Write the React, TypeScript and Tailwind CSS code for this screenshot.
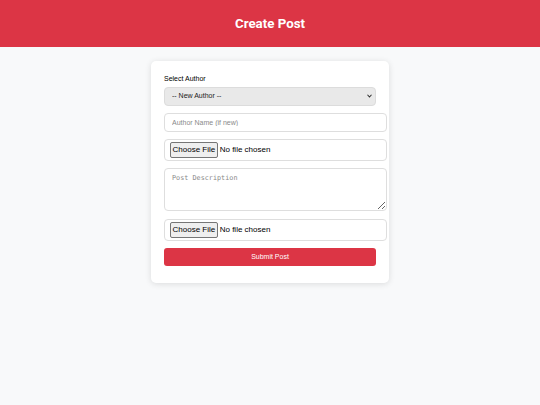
import React from 'react';

const fileClass =
  'text-[8px] w-[200px] text-black file:bg-[#efefef] file:border file:border-solid file:border-[#767676] file:rounded-[2px] file:px-[1.5px] file:py-[1px] file:mr-[2px] file:text-black';

export default function App() {
  return (
    <div className="min-h-[405px] bg-[#f8f9fa] font-['Liberation_Sans',Arial,sans-serif]">
      <header className="h-[47px] bg-[#dc3545] flex items-center justify-center pt-[1px]">
        <h1 className="text-white font-bold text-[13.3px] font-['Roboto',sans-serif]">Create Post</h1>
      </header>

      <div className="flex justify-center pt-[14px]">
        <form
          className="w-[238px] bg-white rounded-[5px] shadow-[0_1px_6px_rgba(0,0,0,0.12)] px-[13px] pt-[13px] pb-[17px]"
          onSubmit={(e) => e.preventDefault()}
        >
          <label className="block text-[7px] text-black mb-[4px] leading-[9px]">Select Author</label>
          <div className="relative w-[212px]">
            <select className="block appearance-none w-[212px] h-[19px] bg-[#e9e9e9] border border-[#dcdcdc] rounded-[4px] text-[7px] px-[7px] text-[#222] outline-none">
              <option>-- New Author --</option>
            </select>
            <svg
              className="absolute right-[4px] top-[7px] pointer-events-none"
              width="5"
              height="4"
              viewBox="0 0 10 8"
            >
              <path d="M1 1.5 L5 6 L9 1.5" fill="none" stroke="#333" strokeWidth="2.2" />
            </svg>
          </div>

          <input
            type="text"
            placeholder="Author Name (if new)"
            className="block mt-[7px] w-[223px] h-[19px] border border-[#dedede] rounded-[4px] px-[7px] text-[7px] placeholder:text-[#8a8a8a] outline-none"
          />

          <div className="mt-[7px] w-[223px] h-[22px] border border-[#dedede] rounded-[4px] flex items-center px-[5px]">
            <input type="file" className={fileClass} />
          </div>

          <textarea
            placeholder="Post Description"
            className="block mt-[7px] w-[223px] h-[43px] border border-[#dedede] rounded-[4px] px-[7px] py-[4px] text-[6.8px] font-['DejaVu_Sans_Mono',monospace] placeholder:text-[#8a8a8a] outline-none"
          />

          <div className="mt-[8px] w-[223px] h-[22px] border border-[#dedede] rounded-[4px] flex items-center px-[5px]">
            <input type="file" className={fileClass} />
          </div>

          <button
            type="submit"
            className="block mt-[7px] w-[212px] h-[18px] bg-[#dc3545] text-white text-[7px] rounded-[3px]"
          >
            Submit Post
          </button>
        </form>
      </div>
    </div>
  );
}
